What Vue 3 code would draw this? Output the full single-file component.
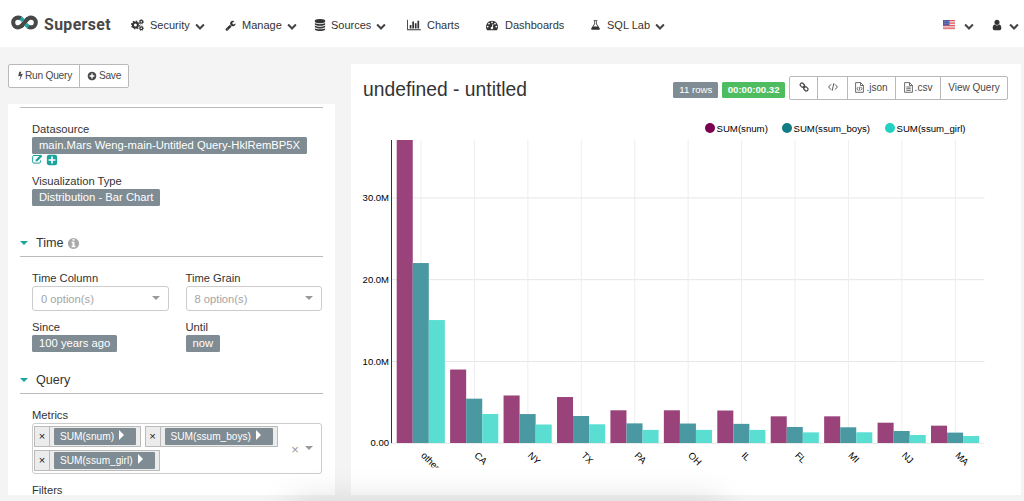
<script setup>
import { h } from 'vue'

const circle = 'M1664 896q0 209-103 385.5t-279.5 279.5-385.5 103-385.5-103-279.5-279.5-103-385.5 103-385.5 279.5-279.5 385.5-103 385.5 103 279.5 279.5 103 385.5z'
const icons = {
  bolt: 'M1333 566q18 20 7 44l-540 1157q-13 25-42 25-4 0-14-2-17-5-25.5-19t-4.5-30l197-808-406 101q-4 1-12 1-18 0-31-11-18-15-13-39l201-825q4-14 16-23t28-9h328q19 0 32 12.5t13 29.5q0 8-5 18l-171 463 396-98q8-2 12-2 19 0 34 15z',
  down: 'M1683 808l-742 741q-19 19-45 19t-45-19l-742-741q-19-19-19-45.5t19-45.5l166-165q19-19 45-19t45 19l531 531 531-531q19-19 45-19t45 19l166 165q19 19 19 45.5t-19 45.5z',
  wrench: 'M448 1472q0-26-19-45t-45-19-45 19-19 45 19 45 45 19 45-19 19-45zm644-420l-682 682q-37 37-90 37-52 0-91-37l-106-108q-38-36-38-90 0-53 38-91l681-681q39 98 114.5 173.5t173.5 114.5zm634-435q0 39-23 106-47 134-164.5 217.5t-258.5 83.5q-185 0-316.5-131.5t-131.5-316.5 131.5-316.5 316.5-131.5q58 0 121.5 16.5t107.5 46.5q16 11 16 28t-16 28l-293 169v224l193 107q5-3 79-48.5t135.5-81 70.5-35.5q15 0 23.5 10t8.5 25z',
  database: 'M896 768q237 0 443-43t325-127v170q0 69-103 128t-280 93.5-385 34.5-385-34.5-280-93.5-103-128v-170q119 84 325 127t443 43zm0 768q237 0 443-43t325-127v170q0 69-103 128t-280 93.5-385 34.5-385-34.5-280-93.5-103-128v-170q119 84 325 127t443 43zm0-384q237 0 443-43t325-127v170q0 69-103 128t-280 93.5-385 34.5-385-34.5-280-93.5-103-128v-170q119 84 325 127t443 43zm0-1152q208 0 385 34.5t280 93.5 103 128v128q0 69-103 128t-280 93.5-385 34.5-385-34.5-280-93.5-103-128v-128q0-69 103-128t280-93.5 385-34.5z',
  bars: 'M640 896v512h-256v-512h256zm384-512v1024h-256v-1024h256zm1024 1152v128h-2048v-1536h128v1408h1920zm-640-896v768h-256v-768h256zm384-384v1152h-256v-1152h256z',
  dash: 'M384 1152q0-53-37.5-90.5t-90.5-37.5-90.5 37.5-37.5 90.5 37.5 90.5 90.5 37.5 90.5-37.5 37.5-90.5zm192-448q0-53-37.5-90.5t-90.5-37.5-90.5 37.5-37.5 90.5 37.5 90.5 90.5 37.5 90.5-37.5 37.5-90.5zm428 481l101-382q6-26-7.5-48.5t-38.5-29.5-48 6.5-30 39.5l-101 382q-60 5-107 43.5t-63 98.5q-20 77 20 146t117 89 146-20 89-117q16-60-6-117t-72-91zm660-33q0-53-37.5-90.5t-90.5-37.5-90.5 37.5-37.5 90.5 37.5 90.5 90.5 37.5 90.5-37.5 37.5-90.5zm-640-640q0-53-37.5-90.5t-90.5-37.5-90.5 37.5-37.5 90.5 37.5 90.5 90.5 37.5 90.5-37.5 37.5-90.5zm448 192q0-53-37.5-90.5t-90.5-37.5-90.5 37.5-37.5 90.5 37.5 90.5 90.5 37.5 90.5-37.5 37.5-90.5zm320 448q0 261-141 483-19 29-54 29h-1402q-35 0-54-29-141-221-141-483 0-182 71-348t191-286 286-191 348-71 348 71 286 191 191 286 71 348z',
  flask: 'M1591 1448q56 89 21.5 152.5t-140.5 63.5h-1152q-106 0-140.5-63.5t21.5-152.5l503-793v-399h-64q-26 0-45-19t-19-45 19-45 45-19h512q26 0 45 19t19 45-19 45-45 19h-64v399zm-779-725l-272 429h712l-272-429-20-31v-436h-128v436z',
  user: 'M1536 1399q0 109-62.5 187t-150.5 78h-854q-88 0-150.5-78t-62.5-187q0-85 8.5-160.5t31.5-152 58.5-131 94-89 134.5-34.5q131 128 313 128t313-128q76 0 134.5 34.5t94 89 58.5 131 31.5 152 8.5 160.5zm-256-887q0 159-112.5 271.5t-271.5 112.5-271.5-112.5-112.5-271.5 112.5-271.5 271.5-112.5 271.5 112.5 112.5 271.5z',
  plus: circle + 'M1344 960v-128q0-26-19-45t-45-19h-256v-256q0-26-19-45t-45-19h-128q-26 0-45 19t-19 45v256h-256q-26 0-45 19t-19 45v128q0 26 19 45t45 19h256v256q0 26 19 45t45 19h128q26 0 45-19t19-45v-256h256q26 0 45-19t19-45z',
  info: circle + 'M1152 1376v-160q0-14-9-23t-23-9h-96v-512q0-14-9-23t-23-9h-320q-14 0-23 9t-9 23v160q0 14 9 23t23 9h96v320h-96q-14 0-23 9t-9 23v160q0 14 9 23t23 9h448q14 0 23-9t9-23zm-128-896v-160q0-14-9-23t-23-9h-192q-14 0-23 9t-9 23v160q0 14 9 23t23 9h192q14 0 23-9t9-23z',
  plusSquare: 'M416 128h960q119 0 203.500 84.500t84.500 203.500v960q0 119-84.500 203.500t-203.500 84.500h-960q-119 0-203.500-84.500t-84.500-203.500v-960q0-119 84.500-203.500t203.500-84.500zM768 384v384h-384v256h384v384h256v-384h384v-256h-384v-384z',
}

const Icon = (p) =>
  h('svg', { viewBox: p.name === 'bars' ? '0 0 2048 1792' : '0 0 1792 1792', class: 'icon' }, [
    h('path', { d: icons[p.name], fill: 'currentColor', 'fill-rule': 'evenodd' }),
  ])
Icon.props = ['name']

const nav = [
  { text: 'Security', icon: 'cogs', menu: true },
  { text: 'Manage', icon: 'wrench', menu: true },
  { text: 'Sources', icon: 'database', menu: true },
  { text: 'Charts', icon: 'bars' },
  { text: 'Dashboards', icon: 'dash' },
  { text: 'SQL Lab', icon: 'flask', menu: true },
]

const legend = [
  { name: 'SUM(snum)', color: '#7b0051' },
  { name: 'SUM(ssum_boys)', color: '#0f7c88' },
  { name: 'SUM(ssum_girl)', color: '#22d1c1' },
]
const colors = ['#99437a', '#4a99a2', '#59ded1']

// Values in millions
const states = [
  ['other', 37.04, 22, 15.03],
  ['CA', 8.98, 5.42, 3.55],
  ['NY', 5.81, 3.54, 2.26],
  ['TX', 5.62, 3.3, 2.29],
  ['PA', 4, 2.4, 1.6],
  ['OH', 4, 2.38, 1.6],
  ['IL', 3.97, 2.34, 1.6],
  ['FL', 3.26, 1.96, 1.3],
  ['MI', 3.26, 1.92, 1.31],
  ['NJ', 2.48, 1.47, 0.98],
  ['MA', 2.12, 1.27, 0.86],
]
const base = 307
const unit = 8.18
const step = 53.43
const groups = states.map(([name, ...v], i) => ({
  name,
  tick: 69.7 + i * step,
  bars: v.map((n, k) => ({ x: 45.7 + i * step + k * 16.05, y: base - n * unit, h: n * unit, fill: colors[k] })),
}))
const yTicks = [['0.00', 0], ['10.0M', 10], ['20.0M', 20], ['30.0M', 30]].map(([t, v]) => ({ t, y: base - v * unit }))
</script>

<template>
  <div class="page">
    <header class="navbar">
      <div class="brand">
        <svg class="logo" viewBox="0 0 26 14" fill="none" stroke-width="3.900">
          <path d="M16.200 3.200C15 4.200 14.200 5.400 13 7C10.800 10 9 11.700 6.800 11.700A4.700 4.700 0 0 1 6.800 2.300C7.900 2.300 8.800 2.600 9.700 3.200" stroke="#484848" />
          <path d="M9.800 10.800C11 9.800 11.800 8.600 13 7C15.200 4 17 2.300 19.200 2.300A4.700 4.700 0 0 1 19.200 11.700C18.100 11.700 17.200 11.400 16.300 10.800" stroke="#484848" />
          <path d="M9.300 2.900C10.300 3.600 10.900 4.300 11.700 5.300M14.300 8.700C15.100 9.700 15.700 10.400 16.700 11.100" stroke="#20a7a0" />
        </svg>
        <span class="brand-name">Superset</span>
      </div>
      <nav class="menu">
        <a v-for="n in nav" :key="n.text" class="item" :class="'nav-' + n.icon">
          <svg v-if="n.icon === 'cogs'" class="icon" viewBox="0 0 13 12" fill="none" stroke="currentColor">
            <circle cx="4.400" cy="6" r="2.500" stroke-width="2" />
            <circle cx="4.400" cy="6" r="3.900" stroke-width="1.200" stroke-dasharray="1.530 1.530" />
            <circle cx="10.300" cy="2.800" r="1.400" stroke-width="1.200" />
            <circle cx="10.300" cy="2.800" r="2.300" stroke-width=".8" stroke-dasharray=".9 .9" />
            <circle cx="10.300" cy="9.200" r="1.400" stroke-width="1.200" />
            <circle cx="10.300" cy="9.200" r="2.300" stroke-width=".8" stroke-dasharray=".9 .9" />
          </svg>
          <Icon v-else :name="n.icon" />
          <span class="item-text">{{ n.text }}</span>
          <Icon v-if="n.menu" name="down" class="caret" />
        </a>
      </nav>
      <div class="account">
        <svg class="flag" viewBox="0 0 12 10">
          <rect width="12" height="10" rx="1" fill="#f3e4e6" />
          <path d="M0 .7h12M0 3.200h12M0 5.700h12M0 8.200h12" stroke="#df5a62" stroke-width="1.200" />
          <path d="M0 0h6.500v5.400h-6.500z" fill="#525c9f" />
          <path d="M1 1.500h5M1 3.500h5" stroke="#9ba2cb" stroke-width=".6" stroke-dasharray=".7 .7" />
        </svg>
        <Icon name="down" class="caret" />
        <Icon name="user" class="user" />
        <Icon name="down" class="caret last" />
      </div>
    </header>

    <main class="content">
      <section class="left">
        <div class="btn-group actions">
          <button class="btn run"><Icon name="bolt" />Run Query</button>
          <button class="btn save"><Icon name="plus" />Save</button>
        </div>
        <div class="panel controls">
          <div class="rule top"></div>
          <div class="field source">
            <label>Datasource</label>
            <span class="tag">main.Mars Weng-main-Untitled Query-HklRemBP5X</span>
            <div class="links">
              <svg class="edit" viewBox="0 0 11 10" fill="none" stroke="currentColor">
                <path d="M8 1.500H1.800Q.7 1.500 .7 2.600V8Q.7 9.100 1.800 9.100H7.300Q8.400 9.100 8.400 8V6.400" />
                <path d="M4.300 6.700L9.600 1.400" stroke-width="2.200" />
                <path d="M3.400 7.500L5.300 7.100L3.900 5.700Z" fill="currentColor" stroke="none" />
              </svg>
              <Icon name="plusSquare" />
            </div>
          </div>
          <div class="field viz">
            <label>Visualization Type</label>
            <span class="tag">Distribution - Bar Chart</span>
          </div>
          <div class="heading time"><i class="tri"></i>Time<Icon name="info" /></div>
          <div class="grid">
            <div class="field">
              <label>Time Column</label>
              <div class="select">0 option(s)<i class="tri grey"></i></div>
            </div>
            <div class="field">
              <label>Time Grain</label>
              <div class="select">8 option(s)<i class="tri grey"></i></div>
            </div>
            <div class="field">
              <label>Since</label>
              <span class="tag">100 years ago</span>
            </div>
            <div class="field">
              <label>Until</label>
              <span class="tag">now</span>
            </div>
          </div>
          <div class="heading query"><i class="tri"></i>Query</div>
          <div class="field metrics">
            <label>Metrics</label>
            <div class="multi">
              <div class="chips">
                <div v-for="m in legend" :key="m.name" class="chip">
                  <span class="x">×</span>
                  <span class="chip-tag">{{ m.name }}<i class="play"></i></span>
                </div>
              </div>
              <span class="clear">×</span>
              <i class="tri grey"></i>
            </div>
          </div>
          <div class="field filters"><label>Filters</label></div>
        </div>
      </section>

      <section class="panel right">
        <div class="title-row">
          <h1>undefined - untitled</h1>
          <span class="badge">11 rows</span>
          <span class="badge timer">00:00:00.32</span>
          <div class="btn-group tools">
            <button class="btn b1">
              <svg class="glyph" viewBox="0 0 10 10" fill="none" stroke="currentColor" stroke-width="1.200">
                <rect x="1" y="1.500" width="4.600" height="3.300" rx="1.600" transform="rotate(45 3.300 3.200)" />
                <rect x="4.600" y="5.200" width="4.600" height="3.300" rx="1.600" transform="rotate(45 6.900 6.800)" />
                <path d="M4 4L6.200 6.200" />
              </svg>
            </button>
            <button class="btn b2">
              <svg class="glyph" viewBox="0 0 10 10" fill="none" stroke="currentColor" stroke-width=".9">
                <path d="M3 2.300L.6 5L3 7.700M7 2.300L9.400 5L7 7.700M5.800 1.300L4.200 8.700" />
              </svg>
            </button>
            <button class="btn b3">
              <svg class="file" viewBox="0 0 9 11" fill="none" stroke="currentColor" stroke-width=".8">
                <path d="M.6 .6H5.500L8.400 3.500V10.300H.6ZM5.500 .6V3.500H8.400M3.200 5L2 6.700L3.200 8.400M5.800 5L7 6.700L5.800 8.400M4.900 4.700L4.100 8.700" />
              </svg>.json
            </button>
            <button class="btn b4">
              <svg class="file" viewBox="0 0 9 11" fill="none" stroke="currentColor" stroke-width=".8">
                <path d="M.6 .6H5.500L8.400 3.500V10.300H.6ZM5.500 .6V3.500H8.400M2.300 5H6.700M2.300 6.700H6.700M2.300 8.400H6.700" />
              </svg>.csv
            </button>
            <button class="btn b5">View Query</button>
          </div>
        </div>
        <div class="legend">
          <span v-for="(l, i) in legend" :key="l.name" class="series" :class="'s' + i">
            <svg viewBox="0 0 10 10"><circle cx="5" cy="5" r="5" :fill="l.color" /></svg>{{ l.name }}
          </span>
        </div>
        <svg class="plot" viewBox="0 0 670 359" width="670" height="359">
          <defs><clipPath id="plot-clip"><rect x="0" y="0" width="670" height="331.500" /></clipPath></defs>
          <line v-for="t in yTicks" :key="t.t" x1="40" x2="633.500" :y1="t.y + 0.3" :y2="t.y + 0.3" class="grid-line" />
          <line v-for="g in groups" :key="g.name" :x1="g.tick + 0.3" :x2="g.tick + 0.3" y1="4" :y2="base" class="grid-line v" />
          <template v-for="g in groups" :key="g.name">
            <rect v-for="(b, k) in g.bars" :key="k" :x="b.x" :y="b.y" width="16.050" :height="b.h" :fill="b.fill" />
          </template>
          <line x1="40.500" x2="40.500" y1="4" :y2="base" stroke="#333" />
          <text v-for="t in yTicks" :key="t.t" x="38" :y="t.y + 3.3" text-anchor="end">{{ t.t }}</text>
          <g clip-path="url(#plot-clip)">
            <text v-for="g in groups" :key="g.name" :transform="`translate(${g.tick - 0.3} 320) rotate(45)`">{{ g.name }}</text>
          </g>
        </svg>
      </section>
    </main>
    <div class="shade"></div>
  </div>
</template>

<style>
body {
  margin: 0;
  overflow: hidden;
}
</style>

<style scoped>
.page {
  position: relative;
  width: 1024px;
  height: 501px;
  overflow: hidden;
  display: flex;
  flex-direction: column;
  background: #f4f4f4;
  color: #484848;
  font-family: "Liberation Sans", Arial, sans-serif;
  font-size: 11.200px;
}
.page * { box-sizing: border-box; }
.navbar {
  height: 47px;
  flex: none;
  display: flex;
  align-items: center;
  background: #fff;
}
.icon { display: block; width: 12px; height: 12px; flex: none; }
.brand { display: flex; align-items: center; width: 131px; padding-left: 11px; flex: none; }
.logo { width: 27px; height: 15px; margin-top: -2px; }
.brand-name {
  margin: 1px 0 0 6px;
  font: bold 15.800px Roboto, sans-serif;
  letter-spacing: 0.4px;
}
.menu { display: flex; padding-top: 3px; }
.item { display: flex; align-items: center; flex: none; white-space: nowrap; color: #333; }
.item-text { margin-left: 6px; font-size: 11px; }
.item > .icon:first-child { margin-left: 1px; }
.nav-cogs > .icon:first-child { width: 13px; height: 12px; margin-left: 0; }
.nav-cogs { width: 93px; }
.nav-wrench { width: 90px; }
.nav-wrench > .icon:first-child { width: 11px; height: 11px; }
.nav-database { width: 92px; }
.nav-database > .icon:first-child { margin-left: 0; }
.nav-database .item-text { margin-left: 5px; }
.nav-bars { width: 79px; }
.nav-bars > .icon:first-child { width: 14px; }
.nav-dash { width: 104px; }
.nav-dash .item-text { margin-left: 7px; }
.nav-flask > .icon:first-child { width: 11px; }
.caret { width: 10px; height: 10px; margin: 1px 0 0 5px; color: #444; }
.account { margin-left: auto; display: flex; align-items: center; padding: 3px 5px 0 0; color: #333; }
.flag { width: 12px; height: 10px; }
.account .caret { margin-left: 9px; }
.user { width: 12px; height: 12px; margin-left: 17px; }
.account .last { margin-left: 6px; }

.content { flex: 1; display: flex; gap: 16px; padding: 17px 3px 6px 8px; min-height: 0; }
.left { width: 327px; flex: none; display: flex; flex-direction: column; }
.panel { background: #fff; }
.btn-group { display: flex; }
.btn {
  display: flex;
  align-items: center;
  justify-content: center;
  height: 24px;
  margin: 0 0 0 -1px;
  padding: 0 0 1px;
  border: 1px solid #b9b9b9;
  background: #fff;
  color: #484848;
  font: 10px "Liberation Sans", Arial, sans-serif;
  white-space: nowrap;
}
.btn:first-child { margin-left: 0; border-radius: 2px 0 0 2px; }
.btn:last-child { border-radius: 0 2px 2px 0; }
.actions { height: 40px; }
.actions .btn { font-size: 10.200px; letter-spacing: -0.25px; }
.run { width: 72px; }
.save { width: 50px; }
.run .icon { width: 9px; height: 9px; }
.save .icon { width: 10px; height: 10px; margin-right: 2px; }

.controls { flex: 1; min-height: 0; overflow: hidden; padding: 0 12px; }
.rule { height: 1px; background: #bbb; }
.rule.top { margin: 3px 0 0; }
.field { display: flex; flex-direction: column; align-items: flex-start; padding-left: 12px; }
label { display: block; height: 15px; line-height: 14px; color: #333; white-space: nowrap; }
.tag {
  height: 17px;
  line-height: 17px;
  padding: 0 7px;
  border-radius: 1.500px;
  background: #7f8c93;
  color: #fff;
  font-size: 11.250px;
  white-space: nowrap;
}
.source { margin-top: 14px; height: 52px; }
.links { display: flex; align-items: center; color: #1ba39c; height: 11px; }
.edit { width: 11px; height: 10px; margin-top: -1px; }
.links .icon { width: 12px; height: 12px; margin-left: 3px; }
.heading {
  display: flex;
  align-items: center;
  height: 27px;
  border-bottom: 1px solid #bbb;
  color: #333;
  font-size: 12.600px;
}
.heading .icon { width: 13px; height: 13px; margin-left: 3px; color: #aaa; }
.tri { width: 0; height: 0; border: 4px solid transparent; border-top: 4.500px solid #1ba39c; border-bottom: 0; margin-right: 8px; }
.tri.grey { border-top: 4.500px solid #999; border-left-width: 4.500px; border-right-width: 4.500px; margin-top: -2px; }
.viz { height: 56px; }
.grid { display: grid; grid-template-columns: 136.500px 136.500px; column-gap: 17px; padding: 14px 0 0 12px; grid-template-rows: 48.500px 47.500px; }
.grid .field { padding-left: 0; }
.select {
  display: flex;
  align-items: center;
  justify-content: space-between;
  width: 100%;
  height: 25px;
  padding-left: 8px;
  border: 1px solid #ccc;
  border-radius: 3px;
  color: #a5a5a5;
}
.metrics { margin-top: 14px; }
.multi {
  display: flex;
  align-items: center;
  width: 290px;
  height: 51px;
  border: 1px solid #ccc;
  border-radius: 3px;
}
.chips { display: flex; flex-wrap: wrap; gap: 3.500px; width: 258px; padding-left: 1px; align-content: center; }
.chip { display: flex; height: 21px; border: 1px solid #bbb; background: #ececec; padding-right: 4px; align-items: center; }
.x { width: 15px; height: 100%; line-height: 19px; text-align: center; border-right: 1px solid #bbb; margin-right: 4px; color: #222; }
.chip-tag { display: flex; align-items: center; height: 17px; padding: 0 12px 0 6px; background: #7f8c93; color: #fff; border-radius: 1px; font-size: 10.150px; }
.play { border: 5px solid transparent; border-left: 5px solid #fff; border-right: 0; margin: -3px 0 0 5px; }
.clear { font-size: 13px; color: #999; width: 14px; margin: 2px 0 0 4px; }
.filters { margin-top: 9px; }

.right { flex: 1; min-width: 0; display: flex; flex-direction: column; }
.title-row { display: flex; align-items: flex-start; height: 57px; padding: 11.500px 13px 0 12px; }
h1 { margin: 2.500px auto 0 0; font-size: 19.300px; line-height: 23px; font-weight: normal; color: #333; white-space: nowrap; }
.badge { height: 16px; line-height: 16px; margin: 6.500px 4px 0 0; padding: 0 6px; border-radius: 1.500px; background: #7f8c93; color: #fff; font-size: 9.600px; white-space: nowrap; }
.timer { background: #4dbd5f; font-weight: bold; padding: 0 5.500px; }
.tools .btn { height: 24px; }
.b1 { width: 29px; }
.b2 { width: 31px; }
.b3 { width: 49px; }
.b4 { width: 46px; }
.b5 { width: 68px; }
.glyph { width: 10px; height: 10px; }
.file { width: 9px; height: 11px; margin-right: 2px; }
.legend { display: flex; height: 15px; align-items: center; padding: 0 0 1px 354px; font-size: 9.650px; color: #000; }
.series { display: flex; align-items: center; gap: 1.500px; white-space: nowrap; }
.series svg { width: 10px; height: 10px; }
.s0 { width: 77px; }
.s1 { width: 103px; }
.plot { display: block; flex: none; }
.plot text { font-size: 9.500px; fill: #000; }
.grid-line { stroke: #e6e6e6; stroke-width: 1; }
.grid-line.v { stroke: #eee; }
.shade {
  position: absolute;
  left: 296px;
  bottom: -34px;
  width: 420px;
  height: 28px;
  box-shadow: 0 0 36px 4px rgba(0, 0, 0, 0.16);
}
</style>
